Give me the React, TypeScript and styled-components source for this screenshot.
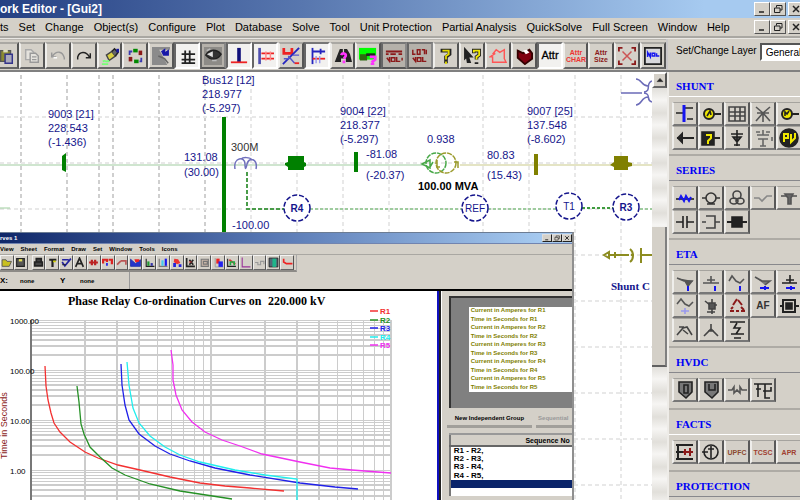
import React from "react";
import styled, { createGlobalStyle, css } from "styled-components";

const face = "#d4d0c8";
const sans = '"Liberation Sans", Arial, sans-serif';
const serif = '"Liberation Serif", "Times New Roman", serif';

const GlobalStyle = createGlobalStyle`
  *, *::before, *::after { box-sizing: border-box; }
  body { margin: 0; background: ${face}; font-family: ${sans}; font-size: 11px; color: #000; overflow: hidden; }
  button, select { font: inherit; color: inherit; }
  svg { display: block; }
`;

const Shell = styled.div`
  display: flex;
  flex-direction: column;
  height: 100vh;
  overflow: hidden;
`;

const TitleBar = styled.header`
  display: flex;
  flex: none;
  align-items: center;
  justify-content: space-between;
  height: 18px;
  overflow: hidden;
  background: linear-gradient(90deg, #254083, #5877af 38%, #a6caf0 88%);
`;

const Title = styled.h1`
  margin: 0;
  color: #fff;
  font-size: 12px;
  line-height: 18px;
  white-space: nowrap;
`;

const WindowButtons = styled.div`
  display: flex;
  flex: none;
  margin-right: -4px;
`;

const WindowButton = styled.button`
  display: grid;
  place-items: center;
  width: 16px;
  height: 14px;
  padding: 0;
  background: ${face};
  border: 1px solid;
  border-color: #fff #555 #555 #fff;
  &:last-child { margin-left: 2px; }
`;

const MenuBar = styled.nav`
  display: flex;
  flex: none;
  align-items: center;
  justify-content: space-between;
  height: 20px;
  background: ${face};
  border-bottom: 2px solid #a9a7a2;
  overflow: hidden;
`;

const MenuList = styled.div`
  display: flex;
  gap: 10px;
`;

const MenuItem = styled.button`
  padding: 0;
  border: 0;
  background: none;
  line-height: 16px;
  white-space: nowrap;
`;

const ToolRow = styled.div`
  display: flex;
  flex: none;
  height: 34px;
  background: ${face};
  border-top: 1px solid #e9e7e3;
  border-bottom: 2px solid #808080;
`;

const ToolStrip = styled.div`
  display: flex;
  flex: 1;
  min-width: 0;
  margin-left: -7px;
  padding: 2px 0 1px;
  border-top: 1px solid #b9b6b0;
`;

const ToolButton = styled.button<{ $pressed?: boolean; $dark?: boolean }>`
  display: grid;
  flex: 1;
  place-items: center;
  min-width: 0;
  padding: 0;
  overflow: hidden;
  border: 2px solid;
  border-color: #aaa8a3 #555 #666 #efeeeb;
  background: ${face};
  ${(p) => p.$dark && css`background: #b5b1aa; border-color: #777 #888 #555 #666;`}
  ${(p) => p.$pressed && css`background: #f2f1ef; border-color: #777 #fff #fff #666;`}
`;

const LayerBox = styled.label`
  display: flex;
  flex: none;
  align-items: flex-start;
  gap: 3px;
  width: 134px;
  padding: 4px 0 0 8px;
  border-left: 2px solid #c9c7c9;
  overflow: hidden;
  white-space: nowrap;
  font-size: 10px;
  line-height: 16px;
`;

const LayerSelect = styled.select`
  flex: none;
  width: 72px;
  height: 18px;
  padding: 0 4px;
  background: #fff;
  border: 2px solid;
  border-color: #555 #fff #fff #555;
  border-radius: 0;
  appearance: none;
`;

const Workspace = styled.main`
  display: flex;
  flex: 1;
  min-height: 0;
`;

const Canvas = styled.section`
  position: relative;
  flex: 1;
  min-width: 0;
  overflow: hidden;
  background: #fff;
`;

const Drawing = styled.svg`
  width: 100%;
  height: 100%;
  font-family: ${sans};
`;

const ScrollColumn = styled.div`
  display: flex;
  flex: none;
  flex-direction: column;
  width: 15px;
  background: ${face};
`;

const ScrollArrow = styled.button`
  display: grid;
  place-items: center;
  height: 16px;
  padding: 0;
  background: ${face};
  border: 2px solid;
  border-color: #fff #555 #666 #fff;
`;

const Track = styled.div<{ $share: number }>`
  flex: ${(p) => p.$share};
  background: repeating-linear-gradient(#e1dfda 0, #f6f5f3 12px, #e1dfda 25px);
`;

const Thumb = styled.div`
  flex: 138;
  background: ${face};
  border-right: 2px solid #808080;
  border-bottom: 2px solid #606060;
`;

const Sidebar = styled.aside`
  flex: none;
  width: 133px;
  background: ${face};
  border-left: 2px solid #eeece8;
  overflow: hidden;
`;

const SectionTitle = styled.h2<{ $light?: boolean }>`
  height: 25px;
  margin: 0;
  padding-left: 7px;
  border-bottom: 1px solid ${(p) => (p.$light ? "#fff" : "#88888c")};
  color: #0000f5;
  font: bold 11px/28px ${serif};
`;

const Palette = styled.div`
  display: grid;
  grid-template-columns: repeat(5, 26px);
  grid-auto-rows: 24px;
  min-height: 37px;
  padding: 5px 0 4px 3px;
  border-bottom: 2px solid #aeaba5;
`;

const PaletteButton = styled.button`
  display: grid;
  place-items: center;
  padding: 0;
  overflow: hidden;
  background: ${face};
  border: 2px solid;
  border-color: #a5a39e #595959 #777 #efeeeb;
  border-top-width: 1px;
`;

const ChildWindow = styled.section`
  position: absolute;
  top: 160px;
  bottom: 0;
  left: 0;
  display: flex;
  flex-direction: column;
  width: 88%;
  background: ${face};
  border-top: 1px solid #6c7c93;
  border-right: 2px solid #909090;
  font-size: 6px;
`;

const ChildTitle = styled.header`
  display: flex;
  flex: none;
  align-items: center;
  justify-content: space-between;
  height: 11px;
  color: #fff;
  font-weight: bold;
  background: linear-gradient(90deg, #0f2769, #5676b2 46%, #a6caf0 95%);
  border-bottom: 1px solid #7184b0;
`;

const ChildButtons = styled.div`
  display: flex;
`;

const ChildButton = styled.button`
  display: grid;
  place-items: center;
  width: 10px;
  height: 8px;
  padding: 0;
  background: ${face};
  border: 1px solid;
  border-color: #ddd #222 #222 #ddd;
`;

const ChildMenu = styled.nav`
  display: flex;
  flex: none;
  gap: 7px;
  height: 11px;
  border-bottom: 1px solid #a9a7a2;
`;

const ChildMenuItem = styled.button`
  padding: 0;
  border: 0;
  background: none;
  font-weight: bold;
  line-height: 9px;
`;

const ChildTools = styled.div`
  display: flex;
  flex: none;
  width: 297px;
  height: 17px;
  border-right: 1px solid #aaa;
  border-bottom: 2px solid #8c8a86;
  padding-right: 2px;
`;

const ChildTool = styled.button<{ $gap?: boolean }>`
  display: grid;
  flex: 1;
  place-items: center;
  min-width: 0;
  margin-left: ${(p) => (p.$gap ? 4 : 0)}px;
  padding: 0;
  overflow: hidden;
  background: ${face};
  border: 1px solid;
  border-color: #f4f3f1 #555 #666 #eee;
`;

const Readouts = styled.div`
  display: flex;
  flex: none;
  align-items: center;
  gap: 12px;
  width: 130px;
  height: 17px;
  border-right: 1px solid #999;
  font-weight: bold;
`;

const Readout = styled.span<{ $label?: boolean }>`
  width: ${(p) => (p.$label ? "8px" : "28px")};
  font-size: ${(p) => (p.$label ? 8 : 6)}px;
`;

const ChildBody = styled.div`
  display: flex;
  flex: 1;
  min-height: 0;
  border-top: 2px solid #000;
`;

const ChartPane = styled.div`
  flex: 1;
  min-width: 0;
  background: #fff;
  border-right: 2px solid #1010c0;
  overflow: hidden;
`;

const DataPane = styled.div`
  display: flex;
  flex: none;
  flex-direction: column;
  width: 133px;
  padding: 5px 0 4px 8px;
  border-left: 2px solid #222;
  box-shadow: inset 1px 0 #fff;
  overflow: hidden;
`;

const Sheet = styled.div`
  flex: none;
  height: 112px;
  padding: 9px 0 0 18px;
  background: #808080;
  border-top: 2px solid #333;
  border-left: 2px solid #333;
`;

const SheetRows = styled.ul`
  display: grid;
  grid-template-rows: repeat(10, 1fr);
  height: 85px;
  margin: 0;
  padding: 0 0 0 2px;
  background: #fff;
  color: #808000;
  font-weight: bold;
  list-style: none;
  white-space: nowrap;
  overflow: hidden;
`;

const Tabs = styled.div`
  display: flex;
  flex: none;
  gap: 4px;
  height: 18px;
  margin: 2px 0 5px -2px;
`;

const Tab = styled.button<{ $off?: boolean }>`
  flex: ${(p) => (p.$off ? "1" : "none")};
  min-width: 0;
  padding: ${(p) => (p.$off ? "0 0 0 2px" : "0 8px")};
  border: 0;
  border-bottom: 3px solid #a19f9a;
  background: none;
  color: ${(p) => (p.$off ? "#999" : "#000")};
  font-weight: bold;
  line-height: 14px;
  text-align: left;
  white-space: nowrap;
`;

const TableArea = styled.div`
  display: flex;
  flex: 1;
  min-height: 0;
  overflow: hidden;
`;

const SequenceTable = styled.table`
  flex: 1;
  width: 100%;
  border-collapse: collapse;
  border-top: 2px solid #999;
  border-left: 2px solid #777;
  background: #fff;
  font-weight: bold;
`;

const SequenceHead = styled.th`
  height: 12px;
  padding: 0 2px 0 0;
  background: ${face};
  border-bottom: 2px solid #666;
  font-size: 7px;
  text-align: right;
  white-space: nowrap;
`;

const SequenceCell = styled.td<{ $selected?: boolean }>`
  height: 8px;
  padding: 0 0 0 3px;
  line-height: 8px;
  font-size: 8px;
  color: ${(p) => (p.$selected ? "#fff" : "#000")};
  background: ${(p) => (p.$selected ? "#0a246a" : "#fff")};
`;

/* ---------- icons, on a 20 × 20 grid ---------- */

type Stroke = [d: string, stroke: string, fill?: string, width?: number];

function Glyph({ parts, size = 20 }: { parts: Stroke[]; size?: number }) {
  return (
    <svg width={size} height={size} viewBox="0 0 20 20" aria-hidden="true">
      {parts.map(([d, stroke, fill = "none", width = 1.6], i) => (
        <path key={i} d={d} stroke={stroke} fill={fill} strokeWidth={width} />
      ))}
    </svg>
  );
}

const K = "#222";
const G = "#888";
const N = "none";
const B = "#1515f0";
const R = "#e22";
const D = "#8b1a1a";
const Y = "#f0e800";

type Tool = { name: string; parts?: Stroke[]; pressed?: boolean; dark?: boolean; lines?: [string, string, string] };

const tools: Tool[] = [
  { name: "Paste", parts: [["M4 4H15V16H4Z", "#555", "#8a8a30"], ["M9 8H17V18H9Z", "#33338b", "#aab"], ["M7 3H12V6H7Z", N, "#ddb"]] },
  { name: "Copy", parts: [["M3 3H9L12 6V14H3Z", "#aaa", "#e4e2dd"], ["M8 7H14L17 10V17H8Z", "#999", "#e4e2dd"], ["M10 11H15M10 14H15", "#999"]] },
  { name: "Undo", parts: [["M3 6V11H8M4 10C8 4 15 4 17 12V14", "#999"], ["M5 12H9", "#fff"]] },
  { name: "Redo", parts: [["M17 7V12H12M16 11C12 4 5 5 3 11V14", K]] },
  { name: "Highlight", parts: [["M6 9L12 5L16 10L9 15Z", "#444", "#d8d040"], ["M12 5L15 2L19 6L16 10", K, "#666"], ["M17 2H20V6H17Z", N, "#1a1aa0"], ["M2 16C5 14 6 18 9 15M1 19H8", "#7f7", N, 2]] },
  { name: "Refresh", parts: [["M4 9V5H7", "#3a3ab0", N, 2], ["M8 4H13", "#080", N, 4], ["M14 4H18V9H14Z", N, D], ["M3 11H7V16H3Z", N, D], ["M9 16H14", "#080", N, 4], ["M17 12V16H15", "#3a3ab0", N, 2]] },
  { name: "Night view", parts: [["M0 0H20V20H0Z", N, "#8b8b8b"], ["M8 3H20V20H17L12 10Z", N, "#d4d0c8"], ["M11 5L14 3V7L18 4V9L13 9Z", "#1818a8", "#1818a8"], ["M7 10L14 13L18 18", "#666"]] },
  { name: "Grid", pressed: true, parts: [["M8 4V19M13 4V19M4 8H19M4 14H19M4 18H19", K, N, 2]] },
  { name: "Visibility", dark: true, parts: [["M0 0H20V20H0Z", N, "#8d8b87"], ["M2 9C6 2 14 2 19 8C15 15 7 15 2 9Z", K, "#333"], ["M5 8L9 6V10Z", "#ddd", "#eee"], ["M3 4L7 2M9 15H14", "#bbb"]] },
  { name: "Bus", pressed: true, parts: [["M10 1V17", "#10107a", N, 4], ["M1 17H19", R, N, 2]] },
  { name: "Branches", pressed: true, parts: [["M4 1V19", "#5050b0", N, 3], ["M6 7H20M6 13H20", R, N, 2], ["M11 5V15M16 5V15", "#f88"]] },
  { name: "Cross section", parts: [["M2 1V7H11V1", R, N, 3], ["M1 19L19 1", "#2424c0", N, 2], ["M7 10L14 18M2 13H8M12 9H19", "#55c"], ["M14 18H19", R, N, 2]] },
  { name: "Layout", pressed: true, parts: [["M5 1V19", "#2424c0", N, 2], ["M5 5H19M14 2V8", "#2424c0", N, 2], ["M5 13H19", R, N, 2], ["M13 10V18M9 10V18", "#99e"]] },
  { name: "Find", parts: [["M5 8L7 3H9V8H12V3H14L17 8L19 16H14V12H7V16H2Z", K, K], ["M8 9C9 6 14 7 13 10L11 13M11 15V18", "#f3f", N, 3]] },
  { name: "Find view", parts: [["M0 1H19V14H0Z", N, "#00ff00"], ["M1 8H9V15H1Z", N, "#2d6b10"], ["M8 7H18V10H8Z", N, K], ["M12 11H18V14L14 17M13 19H17", "#f3f", N, 3]] },
  { name: "Load results", dark: true, parts: [["M1 5H19M1 8H4M6 8H12M15 8H19", D, N, 2], ["M2 12L5 16V11M7 12H11V16H7ZM13 11V16H17M19 12V15", D]] },
  { name: "Loss results", dark: true, parts: [["M2 3V8H5M7 3H10V8H7ZM12 3H15V8M17 3V8", D], ["M2 12L5 16V11M7 12H11V16H7ZM13 11V16H17", D]] },
  { name: "Query", parts: [["M6 6V4H14V8L10 11V18", K, N, 4], ["M6 4H13V8L10 10V14M10 16V19", "#e4da00", N, 2]] },
  { name: "Context help", parts: [["M2 2L10 11H6L8 17H5L4 11L2 13Z", K, K], ["M12 7V4H18V9L15 11V14M15 17V19", K, N, 4], ["M12 6V4H18V9L15 11V14", Y, N, 2]] },
  { name: "Region", parts: [["M4 8L8 3L12 6L17 3V13L19 17H4V11H1L7 7", "#f55"]] },
  { name: "Catalogue", parts: [["M3 4L9 7L16 3L19 7V13L11 19L3 12Z", "#300", "#800010", 2], ["M9 4L13 3L16 6L12 8Z", N, "#fff"]] },
  { name: "Attributes", pressed: true, lines: ["Attr", "", "#000"] },
  { name: "Clear data", lines: ["Attr", "CHAR", "#e33"] },
  { name: "Attribute size", lines: ["Attr", "Size", "#8b1a1a"] },
  { name: "Zoom to fit", parts: [["M1 5V1H5M15 1H19V5M19 15V19H15M5 19H1V15", D, N, 2], ["M5 5L15 15M15 5L5 15", "#c55"]] },
  { name: "Properties", parts: [["M1 1H19V19H1Z", K, "#d8d8dc", 2], ["M4 11V6L7 11V6M9 7H12V10H9ZM14 7V10H17", B]] },
];

function ToolText({ lines: [a, b, color] }: { lines: [string, string, string] }) {
  const large = !b;
  return (
    <svg width="22" height="20" viewBox="0 0 22 20">
      <text x="11" y={large ? 13 : 9} fill={color} fontSize={large ? 11 : 7} fontWeight={large ? 400 : 700} stroke={large ? color : "none"} strokeWidth="0.3" textAnchor="middle">{a}</text>
      <text x="11" y="16" fill={color} fontSize="7" fontWeight={700} textAnchor="middle">{b}</text>
    </svg>
  );
}

type Device = { name: string; parts?: Stroke[]; word?: [string, string] };

const sections: { title: string; light?: boolean; devices: Device[] }[] = [
  {
    title: "SHUNT",
    light: true,
    devices: [
      { name: "Busbar", parts: [["M1 9H9M10 4H18M12 15H18", K], ["M9 1V18", B, N, 3]] },
      { name: "Generator", parts: [["M13 10H20", K, N, 2], ["M3 10A5 5 0 1 1 13 10A5 5 0 1 1 3 10", K, Y, 2], ["M6 12L9 7L10 11", K]] },
      { name: "Grid infeed", parts: [["M2 3H18V17H2ZM2 8H18M2 12H18M8 3V17M13 3V17", "#444"]] },
      { name: "Load node", parts: [["M3 3L10 9L17 3M10 9V18M3 17L10 9L17 17M4 9H16", "#555"]] },
      { name: "Motor", parts: [["M13 10H20", K, N, 2], ["M3 10A5 5 0 1 1 13 10A5 5 0 1 1 3 10", K, Y, 2], ["M6 12V8L8 10L10 7", K]] },
      { name: "Load", parts: [["M2 10H19M7 6L3 10L7 14Z", K, "#777", 2]] },
      { name: "Wind unit", parts: [["M1 4H13V17H1Z", K, K], ["M5 7H10V10L7 13V16", Y, N, 2], ["M13 10H19", K, N, 2]] },
      { name: "Shunt reactor", parts: [["M10 2V18M4 6H16M6 9H14L10 14ZM7 17H13", K, "#555"]] },
      { name: "Shunt capacitor", parts: [["M10 2V7M4 7H16M5 11H15M10 11V18M3 4H7M13 4H17M7 18H13M19 9V13", "#666"]] },
      { name: "Photovoltaic", parts: [["M1 10A9 9 0 1 1 19 10A9 9 0 1 1 1 10", K, K], ["M5 14V6H9V10H5M12 6V14L16 10V5", Y, N, 2]] },
    ],
  },
  {
    title: "SERIES",
    devices: [
      { name: "Line", parts: [["M1 11H19", K], ["M4 12L6 8L9 13L11 8L14 13L16 9", B, N, 2]] },
      { name: "Transformer", parts: [["M1 10H5M15 10H19M5 10A5 5 0 1 1 15 10A5 5 0 1 1 5 10M6 16H14", "#333"]] },
      { name: "Three winding transformer", parts: [["M6 7A4 4 0 1 1 14 7A4 4 0 1 1 6 7M3 13A4 3 0 1 1 11 13A4 3 0 1 1 3 13M9 13A4 3 0 1 1 17 13A4 3 0 1 1 9 13", "#444"]] },
      { name: "Switch", parts: [["M1 10H6L9 13L14 8H19", G]] },
      { name: "Breaker", parts: [["M2 8H18", "#555"], ["M6 6H14L12 10V16H9V10Z", "#555", "#666"]] },
      { name: "Series capacitor", parts: [["M1 10H8M8 4V16M12 4V16M12 10H19", K]] },
      { name: "Series reactor", parts: [["M1 10H5M5 4H14V16H5M14 10H19", "#444"]] },
      { name: "Circuit breaker", parts: [["M0 10H20", K, N, 2], ["M5 5H15V15H5Z", K, K]] },
    ],
  },
  {
    title: "ETA",
    devices: [
      { name: "Inductor filter", parts: [["M2 6L9 9H18M10 9H17L13 14Z", "#555", "#555"], ["M13 14V19", B, N, 2]] },
      { name: "Ground filter", parts: [["M2 11H18M10 4V11M6 8H14", "#555"], ["M14 14V19", B, N, 2]] },
      { name: "Wave filter", parts: [["M2 9L5 4L9 9L13 11L17 7", "#555"], ["M13 14V19", B, N, 2]] },
      { name: "Inductor link", parts: [["M2 5L9 9H17L12 13", "#555", "#777"], ["M7 16H16M12 14V18", B, N, 2]] },
      { name: "Ground link", parts: [["M3 11H18M11 3V11M7 8H15", K], ["M7 16H16M12 14V18", B, N, 2]] },
      { name: "Wave link", parts: [["M2 8L6 3L10 8L14 10L18 6", "#555"], ["M6 15H14M10 12V18", "#99e"]] },
      { name: "Source", parts: [["M4 5L9 9H16M6 16H14M11 3V18", "#444"], ["M8 7H14V13H8Z", "#444", "#555"]] },
      { name: "Delta", parts: [["M10 3L6 9M11 4L15 9", D, N, 2], ["M3 15H7M9 15H12M14 15H18M4 13L6 11M14 11L17 14", D, N, 2]] },
      { name: "Air filter", word: ["AF", "#333"] },
      { name: "Machine", parts: [["M4 4H16V16H4ZM1 10H4M16 10H20", K, N, 2], ["M7 7H13V13H7Z", K, K]] },
      { name: "Arc furnace", parts: [["M2 15L8 8L12 7L17 15M8 10L13 14M4 7H9", "#444"]] },
      { name: "Antenna", parts: [["M3 16L10 9L17 16M10 4V9M7 11H13", "#444"]] },
      { name: "Traction load", parts: [["M3 2H18M10 3L7 8H13L9 14M4 14H17M7 18H14", K]] },
    ],
  },
  {
    title: "HVDC",
    devices: [
      { name: "Rectifier", parts: [["M4 2H17V12L11 18L4 12Z", K, "#777"], ["M9 5H13V13H9Z", K]] },
      { name: "Inverter", parts: [["M4 2H17V12L11 18L4 12Z", K, "#777"], ["M8 4V10H14V4", K]] },
      { name: "DC line", parts: [["M1 10H5L7 7V13L10 10L13 13V7L15 10H20", "#555"]] },
      { name: "DC converter", parts: [["M1 4H19M5 4V17M3 9H8M12 4V18H17M10 11H18V7", K]] },
    ],
  },
  {
    title: "FACTS",
    light: true,
    devices: [
      { name: "Static compensator", parts: [["M1 3H18M1 17H18M3 3V17M1 10H9", K, N, 2], ["M8 10H18M10 7V13M15 6V14", D, N, 2]] },
      { name: "Phase shifter", parts: [["M3 10A7 7 0 1 1 17 10A7 7 0 1 1 3 10M1 10H7M10 4V16M7 7H13", K]] },
      { name: "UPFC", word: ["UPFC", "#8b4a30"] },
      { name: "TCSC", word: ["TCSC", "#a04030"] },
      { name: "SVC", word: ["APR", "#a04030"] },
    ],
  },
  { title: "PROTECTION", devices: [] },
];

/* ---------- network diagram ---------- */

const navy = "#15158c";

function Label({ x, y, lines, step = 14 }: { x: number; y: number; lines: string[]; step?: number }) {
  return (
    <text x={x} y={y} fill={navy} fontSize="11">
      {lines.map((t, i) => (
        <tspan key={i} x={x} y={y + i * step}>{t}</tspan>
      ))}
    </text>
  );
}

function Relay({ x, y, name }: { x: number; y: number; name: string }) {
  return (
    <g>
      <circle cx={x} cy={y} r="13" fill="#fff" stroke={navy} strokeWidth="1.5" strokeDasharray="5 2" />
      <text x={x} y={y + 4} fill={navy} fontSize="10" textAnchor="middle" fontWeight={name.startsWith("R") && name.length === 2 ? 700 : 400}>{name}</text>
    </g>
  );
}

function Diagram() {
  return (
    <Drawing role="img" aria-label="Network diagram">
      <g stroke="#cfcfcf" strokeWidth="2" strokeDasharray="4 3">
        {[21, 67, 99, 113, 159, 205].map((x) => <path key={x} d={`M${x} 3V440`} />)}
      </g>
      <g stroke="#e8e8e8" strokeWidth="2" strokeDasharray="4 3">
        {[251, 297, 343, 389, 483, 529, 575, 621].map((x) => <path key={x} d={`M${x} 3V440`} />)}
        {[45, 91, 137, 183, 229, 275, 321, 367, 413].map((y) => <path key={y} d={`M0 ${y}H900`} />)}
      </g>
      <path d="M0 93H424" stroke="#cfe5cf" strokeWidth="2" />
      <path d="M460 93H900" stroke="#e4e4c4" strokeWidth="2" />
      <path d="M0 136H10" stroke="#9fcf9f" />
      <path d="M247 100V137H285" fill="none" stroke="#4a9c4a" strokeWidth="2" strokeDasharray="4 2" />
      <path d="M310 137H462M488 137H556M640 137H900" stroke="#9fcc9f" strokeWidth="2" strokeDasharray="3 2" />
      <path d="M582 136H613" stroke="#3f9c3f" strokeWidth="2" strokeDasharray="3 2" />
      <g fill="#008000">
        <path d="M222 45H226V160H222ZM62 84L66 81V100L62 98ZM354 80H358V100H354ZM288 84H304V90L306 91V94L304 95V98H288V95L285 93V91L288 90Z" />
      </g>
      <path d="M534 82H538V103H534ZM614 84H628V90L632 91V94L628 95V98H614V95L610 93L614 90Z" fill="#808000" />
      <path d="M235 97C233 85 245 84 245 92C245 98 246 98 247 92C249 84 258 87 256 97M241 87C243 85 250 85 252 88" fill="none" stroke="#7070bd" strokeWidth="1.5" />
      <g fill="none" strokeWidth="1.5">
        <circle cx="436" cy="91" r="10" stroke="#48a848" strokeDasharray="5 1" />
        <circle cx="446" cy="91" r="10" stroke="#9b9b2c" strokeDasharray="5 1" />
        <path d="M422 92L430 88V96ZM430 95L433 90" stroke="#48a848" />
        <path d="M437 88V95H440M454 90H458V96" stroke="#9b9b2c" />
      </g>
      <Label x={202} y={12} lines={["Bus12 [12]", "218.977", "(-5.297)"]} />
      <Label x={48} y={46} lines={["9003 [21]", "228.543", "(-1.436)"]} />
      <Label x={340} y={43} lines={["9004 [22]", "218.377", "(-5.297)"]} />
      <Label x={527} y={43} lines={["9007 [25]", "137.548", "(-8.602)"]} />
      <Label x={184} y={89} lines={["131.08", "(30.00)"]} step={15} />
      <Label x={366} y={86} lines={["-81.08", "(-20.37)"]} step={21} />
      <Label x={427} y={71} lines={["0.938"]} />
      <Label x={487} y={87} lines={["80.83", "(15.43)"]} step={20} />
      <Label x={232} y={157} lines={["-100.00"]} />
      <text x="231" y="79" fontSize="11" fill="#333">300M</text>
      <text x="418" y="118" fontSize="11" fontWeight="700">100.00 MVA</text>
      <Relay x={297} y={136} name="R4" />
      <Relay x={475} y={136} name="REF" />
      <Relay x={569} y={134} name="T1" />
      <Relay x={626} y={135} name="R3" />
      <g fill="none" stroke="#6b6bb8" strokeWidth="1.5">
        <path d="M621 21H642M636 7C642 7 641 14 648 14M652 9C645 11 652 19 644 20M636 33C642 33 641 25 648 25M652 30C645 28 652 22 644 21" />
      </g>
      <path d="M604 183L609 180V186ZM609 183H629M615 180V186M630 177C634 180 634 187 630 190M634 183H631M641 176V191M641 183H652" fill="none" stroke="#8c8c20" strokeWidth="2" />
      <text x="611" y="218" fontFamily="Liberation Serif, serif" fontSize="11" fontWeight="700" fill={navy}>Shunt C</text>
    </Drawing>
  );
}

/* ---------- relay chart ---------- */

const curves = [
  { name: "R1", color: "#f33030", d: "M45 75L46 95L48 109L51 122L54 132L60 141L70 151L85 161L98 167L118 174L140 179L170 186L200 192L225 195L250 197L284 200" },
  { name: "R2", color: "#259025", d: "M77 95L79 111L81 133L84 143L90 156L100 166L112 177L125 184L150 193L180 200L232 208" },
  { name: "R3", color: "#2020e8", d: "M121 73L122 94L125 114L129 129L139 143L155 155L170 163L190 170L215 177L250 184L300 192L335 196L358 198" },
  { name: "R4", color: "#20eeee", d: "M127 71L129 94L133 117L139 132L150 145L165 156L180 164L200 171L235 179L265 184L297 188V215" },
  { name: "R5", color: "#f030f0", d: "M171 59L173 74L173 89L176 104L182 119L192 131L205 141L222 149L240 155L262 163L300 171L330 177L352 179L391 182" },
];

const decadeSteps = [2, 3, 4, 5, 6, 7, 8, 9, 10];
const verticals = [0, 1].flatMap((k) => decadeSteps.map((n) => Math.round(31 + 180 * (k + Math.log10(n)))));
const horizontals = [1, 2, 3, 4].flatMap((k) => decadeSteps.map((n) => Math.round(29 + 50 * (k - Math.log10(n)))));

function Chart() {
  return (
    <Drawing role="img" aria-label="Phase relay co-ordination curves">
      <g stroke="#cccccc" shapeRendering="crispEdges">
        {horizontals.map((y, i) => <path key={i} d={`M31 ${y}H391`} strokeWidth={i % 9 < 4 ? 2 : 1} />)}
        {verticals.map((x, i) => <path key={i} d={`M${x} 29V230`} strokeWidth={i % 9 < 3 || i % 9 === 8 ? 2 : 1} />)}
      </g>
      <path d="M31 29V230" stroke="#777" strokeWidth="2" />
      <g fontSize="8">
        {["1000.00", "100.00", "10.00", "1.00"].map((t, i) => (
          <text key={t} x="10" y={33 + i * 50}>{t}</text>
        ))}
      </g>
      <text transform="translate(7 168) rotate(-90)" fontSize="9" fill="#8b1a1a">Time in Seconds</text>
      <g fontFamily="Liberation Serif, serif" fontSize="11" fontWeight="700">
        <text x="68" y="14" fontSize="12">Phase Relay Co-ordination Curves on</text>
        <text x="268" y="14" fontSize="12">220.000 kV</text>
      </g>
      {curves.map((c, i) => (
        <g key={c.name}>
          <path d={c.d} fill="none" stroke={c.color} strokeWidth="1.3" />
          <path d={`M370 ${20 + Math.round(i * 8.5)}H378`} stroke={c.color} strokeWidth="1.5" />
          <text x="380" y={23 + Math.round(i * 8.5)} fill={c.color} fontSize="8" fontWeight="700">{c.name}</text>
        </g>
      ))}
    </Drawing>
  );
}

const chartTools: { name: string; parts: Stroke[] }[] = [
  { name: "Open", parts: [["M2 5H9L11 8H19L15 17H2Z", "#555", "#c8c020"]] },
  { name: "Save", parts: [["M3 3H17V17H3Z", K, "#555", 2], ["M7 4H13V8H7Z", N, "#e5e055"]] },
  { name: "Print", parts: [["M3 9H17V16H3ZM6 3H15V9H6Z", K, "#444", 3]] },
  { name: "Text", parts: [["M4 5H17M10 5V18", K, N, 4], ["M11 8H16", "#cc0", N, 3]] },
  { name: "Check", parts: [["M2 5H14M2 9L7 16L18 3", "#2222a0", N, 3], ["M2 14H9", K]] },
  { name: "Annotate", parts: [["M3 18L10 2L17 18M6 12H14", K, N, 3]] },
  { name: "Horizontal fit", parts: [["M2 10H18M7 5V15M13 5V15", "#b22", N, 4]] },
  { name: "Replot", parts: [["M2 12V5H9V9M12 5H18V13", "#d22", N, 4], ["M9 11V16", B, N, 3]] },
  { name: "Shift", parts: [["M2 14L9 7M9 7H18V14", "#b55", N, 3]] },
  { name: "Area plot", parts: [["M1 4V17H19V5L10 12Z", "#23a", "#23c"], ["M8 4H17V8L10 10Z", N, "#e22"]] },
  { name: "Bar plot", parts: [["M4 3V17H19", K, N, 2], ["M8 8V16", "#293", N, 4], ["M14 11V16", "#33a", N, 4]] },
  { name: "Column plot", parts: [["M4 3V17H19", "#777", N, 2], ["M10 6V16", "#4ce", N, 4], ["M16 3V16", B, N, 4]] },
  { name: "Symbols", parts: [["M6 3L13 4L17 11L11 13L5 9Z", N, "#e33"], ["M4 11H9V18H4ZM14 13H19V18H14Z", N, "#22d"]] },
  { name: "Series", parts: [["M3 2V17H18M8 5L15 14M15 5L8 14", K, N, 3], ["M7 9H12", "#c33", N, 2]] },
  { name: "Frame", parts: [["M4 4H17V17H4ZM8 8H15V13H8Z", "#777", "#c9b6a8", 2]] },
  { name: "Stack", parts: [["M4 2V18H19", "#999"], ["M6 3H12V12H6Z", N, "#e22"], ["M10 8H18V18H10Z", N, "#22e"]] },
  { name: "Legend", parts: [["M3 3V17H18", K, N, 2], ["M6 5L17 13", "#d33", N, 3], ["M8 15V9H15V15", "#2a4", N, 3]] },
  { name: "Axes", parts: [["M4 1V18H19", "#939", N, 2]] },
  { name: "Scale", parts: [["M2 10H7V14H12V8H18V13", "#999", N, 2]] },
  { name: "Data", parts: [["M2 2H18V18H2Z", K, "#567"], ["M8 3H15V18H8Z", N, "#1fb58a"]] },
  { name: "Curve", parts: [["M3 3V9L8 12H19", "#e22", N, 3]] },
];

const sheetRows = [1, 2, 3, 4, 5].flatMap((n) => [`Current in Amperes for R${n}`, `Time in Seconds for R${n}`]);
const sequence = ["R1 - R2,", "R2 - R3,", "R3 - R4,", "R4 - R5,"];
const menus = ["ts", "Set", "Change", "Object(s)", "Configure", "Plot", "Database", "Solve", "Tool", "Unit Protection", "Partial Analysis", "QuickSolve", "Full Screen", "Window", "Help"];
const childMenus = ["View", "Sheet", "Format", "Draw", "Set", "Window", "Tools", "Icons"];

const controls: { name: string; parts: Stroke[] }[] = [
  { name: "Minimize", parts: [["M4 16H14", K, N, 3]] },
  { name: "Restore", parts: [["M7 7V3H18V12H14M3 8H14V17H3Z", K, N, 2]] },
  { name: "Close", parts: [["M4 4L16 16M16 4L4 16", K, N, 3]] },
];

function Controls() {
  return (
    <WindowButtons>
      {controls.map((c) => (
        <WindowButton key={c.name} aria-label={c.name}><Glyph parts={c.parts} size={10} /></WindowButton>
      ))}
    </WindowButtons>
  );
}

function CurveWindow() {
  return (
    <ChildWindow aria-label="Relay curves">
      <ChildTitle>
        <span>rves 1</span>
        <ChildButtons>
          {controls.map((c) => (
            <ChildButton key={c.name} aria-label={c.name}><Glyph parts={c.parts} size={6} /></ChildButton>
          ))}
        </ChildButtons>
      </ChildTitle>
      <ChildMenu>
        {childMenus.map((m) => <ChildMenuItem key={m}>{m}</ChildMenuItem>)}
      </ChildMenu>
      <ChildTools>
        {chartTools.map((t, i) => (
          <ChildTool key={t.name} aria-label={t.name} $gap={i === 2}><Glyph parts={t.parts} size={11} /></ChildTool>
        ))}
      </ChildTools>
      <Readouts>
        <Readout $label>X:</Readout>
        <Readout>none</Readout>
        <Readout $label>Y</Readout>
        <Readout>none</Readout>
      </Readouts>
      <ChildBody>
        <ChartPane><Chart /></ChartPane>
        <DataPane>
          <Sheet>
            <SheetRows>{sheetRows.map((r) => <li key={r}>{r}</li>)}</SheetRows>
          </Sheet>
          <Tabs>
            <Tab>New Independent Group</Tab>
            <Tab $off>Sequential</Tab>
          </Tabs>
          <TableArea>
            <SequenceTable>
              <thead><tr><SequenceHead>Sequence No</SequenceHead></tr></thead>
              <tbody>
                {sequence.map((s) => <tr key={s}><SequenceCell>{s}</SequenceCell></tr>)}
                <tr><SequenceCell $selected /></tr>
                <tr><SequenceCell /></tr>
              </tbody>
            </SequenceTable>
          </TableArea>
        </DataPane>
      </ChildBody>
    </ChildWindow>
  );
}

export default function App() {
  return (
    <>
      <GlobalStyle />
      <Shell>
        <TitleBar><Title>ork Editor - [Gui2]</Title><Controls /></TitleBar>
        <MenuBar>
          <MenuList>{menus.map((m) => <MenuItem key={m}>{m}</MenuItem>)}</MenuList>
          <Controls />
        </MenuBar>
        <ToolRow>
          <ToolStrip>
            {tools.map((t) => (
              <ToolButton key={t.name} aria-label={t.name} $pressed={t.pressed} $dark={t.dark}>
                {t.parts ? <Glyph parts={t.parts} size={18} /> : <ToolText lines={t.lines!} />}
              </ToolButton>
            ))}
          </ToolStrip>
          <LayerBox>
            Set/Change Layer
            <LayerSelect defaultValue="General"><option>General</option></LayerSelect>
          </LayerBox>
        </ToolRow>
        <Workspace>
          <Canvas>
            <Diagram />
            <CurveWindow />
          </Canvas>
          <ScrollColumn>
            <ScrollArrow aria-label="Scroll up"><Glyph parts={[["M3 14L10 6L17 14Z", K, K]]} size={8} /></ScrollArrow>
            <Track $share={140} />
            <Thumb />
            <Track $share={134} />
          </ScrollColumn>
          <Sidebar>
            {sections.map((s) => (
              <section key={s.title}>
                <SectionTitle $light={s.light}>{s.title}</SectionTitle>
                <Palette>
                  {s.devices.map((d) => (
                    <PaletteButton key={d.name} aria-label={d.name}>
                      {d.parts ? (
                        <Glyph parts={d.parts} size={20} />
                      ) : (
                        <svg width="20" height="18" viewBox="0 0 20 18">
                          <text x="10" y="12" textAnchor="middle" fontSize={d.word![0].length > 2 ? 7 : 10} fontWeight="700" fill={d.word![1]}>{d.word![0]}</text>
                        </svg>
                      )}
                    </PaletteButton>
                  ))}
                </Palette>
              </section>
            ))}
          </Sidebar>
        </Workspace>
      </Shell>
    </>
  );
}
